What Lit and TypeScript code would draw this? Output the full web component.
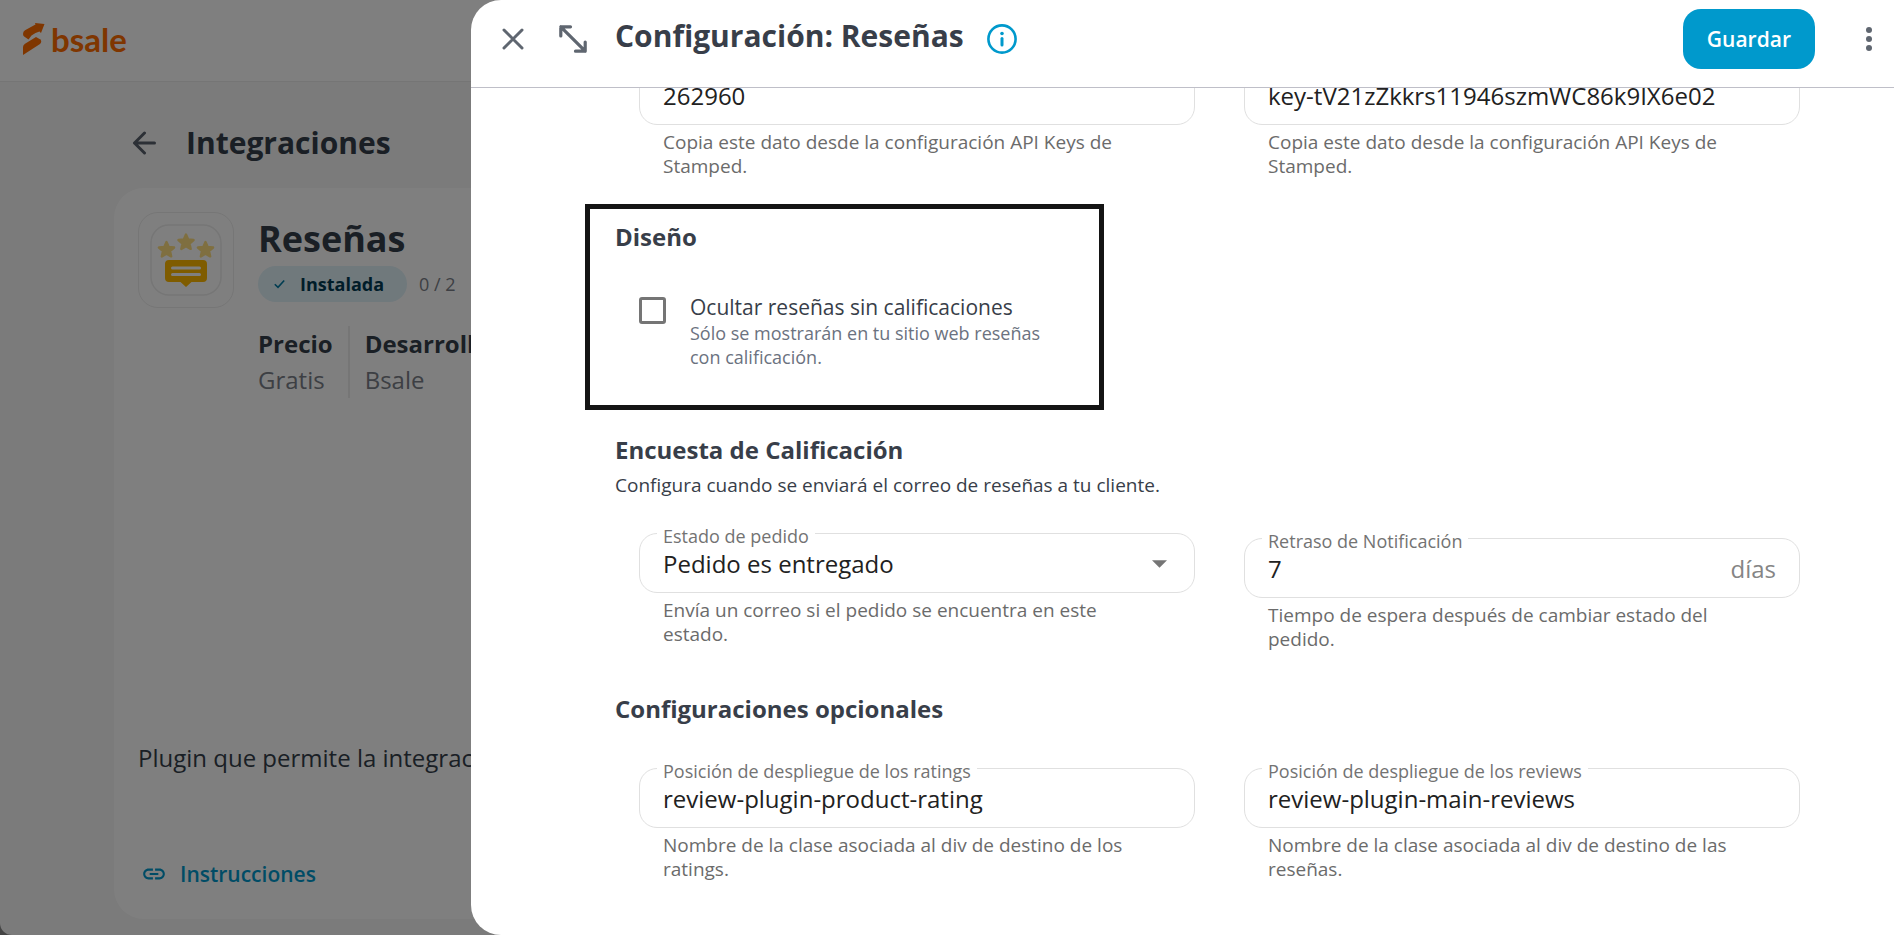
import { LitElement, html, css, nothing } from "lit";
import { customElement, property } from "lit/decorators.js";

@customElement("form-field")
class FormField extends LitElement {
  @property() label = "";
  @property() name = "";
  @property() value = "";
  @property() hint = "";
  @property() suffix = "";
  @property({ type: Array }) options: string[] = [];

  static styles = css`
    :host {
      display: block;
      min-width: 0;
    }
    .box {
      position: relative;
      display: flex;
      align-items: center;
      height: 60px;
      box-sizing: border-box;
      padding: 1px 23px 0;
      border: 1px solid #e0e0e0;
      border-radius: 18px;
      background: #fff;
    }
    .label {
      position: absolute;
      top: -8px;
      left: 17px;
      padding: 0 6px;
      background: #fff;
      color: #737373;
      font-size: 18px;
      line-height: 20px;
      white-space: nowrap;
    }
    .control {
      flex: 1;
      min-width: 0;
      height: 32px;
      margin: 0;
      padding: 0;
      border: 0;
      outline: 0;
      background: none;
      color: #212121;
      font: 400 24px/32px "Open Sans", sans-serif;
      appearance: none;
    }
    .suffix {
      color: #858585;
      font-size: 24px;
      line-height: 32px;
    }
    .caret {
      width: 15px;
      height: 8px;
      margin-right: 4px;
      fill: #757575;
      pointer-events: none;
    }
    .hint {
      margin: 5px 48px 0 24px;
      color: #6b6b6b;
      font-size: 19px;
      line-height: 24px;
    }
  `;

  render() {
    return html`
      <div class="box">
        ${this.label ? html`<label class="label" for="control">${this.label}</label>` : nothing}
        ${this.options.length
          ? html`<select class="control" id="control" aria-describedby="hint">
                ${this.options.map((o) => html`<option>${o}</option>`)}
              </select>
              <svg class="caret" viewBox="0 0 14 7" aria-hidden="true"><path d="M0 0h14l-7 7z" /></svg>`
          : html`<input
              class="control"
              id="control"
              aria-label=${this.label || this.name}
              aria-describedby="hint"
              .value=${this.value}
            />`}
        ${this.suffix ? html`<span class="suffix">${this.suffix}</span>` : nothing}
      </div>
      <p class="hint" id="hint">${this.hint}</p>
    `;
  }
}

@customElement("plugin-page")
class PluginPage extends LitElement {
  static styles = css`
    :host {
      display: flex;
      flex-direction: column;
      height: 100vh;
      overflow: hidden;
      border-bottom-left-radius: 12px;
      background: #f6f6f6;
      color: #353e4a;
    }
    .topbar {
      display: flex;
      align-items: center;
      gap: 6px;
      height: 82px;
      box-sizing: border-box;
      padding: 0 23px 4px;
      border-bottom: 1px solid #ebebeb;
      background: #fff;
      color: #ff6c00;
    }
    .mark {
      width: 22px;
      height: 32px;
      fill: currentColor;
    }
    .brand {
      font: 700 33px/40px Lato, sans-serif;
    }
    .heading {
      display: flex;
      align-items: center;
      gap: 30px;
      padding: 41px 132px 25px;
    }
    .back {
      display: flex;
      padding: 0;
      border: 0;
      background: none;
      color: #59616c;
    }
    .back svg {
      width: 24px;
      height: 24px;
    }
    .heading h1 {
      margin: 0;
      font-size: 30px;
      line-height: 40px;
    }
    .card {
      flex: 1;
      display: flex;
      flex-direction: column;
      align-items: flex-start;
      margin: 0 114px 16px;
      padding: 24px 24px 29px;
      border-radius: 30px;
      background: #fff;
    }
    .summary {
      display: flex;
      align-items: flex-start;
      gap: 24px;
    }
    .frame {
      flex: none;
      width: 96px;
      height: 96px;
      box-sizing: border-box;
      padding: 11px;
      border: 1px solid #ececec;
      border-radius: 20px;
    }
    .frame svg {
      display: block;
      width: 72px;
      height: 72px;
    }
    .name {
      margin: 3px 0;
      font-size: 36px;
      line-height: 48px;
    }
    .status {
      display: flex;
      align-items: center;
      gap: 12px;
      font-size: 18px;
      line-height: 36px;
      color: #7a7f88;
    }
    .chip {
      display: flex;
      align-items: center;
      gap: 15px;
      padding: 0 23px 0 16px;
      border-radius: 18px;
      background: #e0f2f9;
      color: #003a52;
      font-weight: 700;
    }
    .chip svg {
      width: 11px;
      height: 10px;
      color: #007aa3;
    }
    .facts {
      display: flex;
      margin: 24px 0 0;
      font-size: 24px;
      line-height: 36px;
    }
    .facts div + div {
      margin-left: 15px;
      padding-left: 15px;
      border-left: 2px solid #ececec;
    }
    .facts dt {
      font-weight: 700;
    }
    .facts dd {
      margin: 0;
      color: #7a7f88;
    }
    .about {
      margin: auto 0 82px;
      font-size: 24px;
      line-height: 36px;
    }
    .guide {
      display: flex;
      align-items: center;
      gap: 13px;
      padding-left: 3px;
      color: #0099cc;
      font-size: 21px;
      font-weight: 600;
      line-height: 32px;
      text-decoration: none;
    }
    .guide svg {
      width: 26px;
      height: 26px;
      fill: currentColor;
    }
  `;

  render() {
    return html`
      <header class="topbar">
        <svg class="mark" viewBox="0 0 22 32" aria-hidden="true">
          <path d="M0 11Q0 8.500 2 7.300L12.500 1.600 12 0 21.500 1 18 10 16.500 8.400Q12.500 9.500 8.500 12.500L5.500 16.500 1.500 13.800Q0 13 0 11Z" />
          <path d="M0 32V24Q0 22 2 20.700L13 14 17 16.300Q19.500 18.500 17 21Z" />
        </svg>
        <span class="brand">bsale</span>
      </header>
      <div class="heading">
        <button class="back" aria-label="Volver">
          <svg viewBox="0 0 24 24" fill="none" stroke="currentColor" stroke-width="3" stroke-linecap="round" stroke-linejoin="round">
            <path d="M22.500 12H2.500M12.500 2L2.500 12l10 10" />
          </svg>
        </button>
        <h1>Integraciones</h1>
      </div>
      <section class="card">
        <div class="summary">
          <div class="frame">
            <svg viewBox="0 0 72 72" aria-hidden="true">
              <rect x="1" y="1" width="70" height="70" rx="18" fill="#fff" stroke="#ececec" stroke-width="1.500" />
              <g fill="#ffdf80" stroke="#ffdf80" stroke-width="2.400" stroke-linejoin="round">
                <path d="M36 10.500l2.200 5 5.400.500-4.100 3.600 1.200 5.300-4.700-2.800-4.700 2.800 1.200-5.300-4.100-3.600 5.400-.500z" />
                <path d="M16.500 18l2.200 5 5.400.500-4.100 3.600 1.200 5.300-4.700-2.800-4.700 2.800 1.200-5.300-4.100-3.600 5.400-.500z" />
                <path d="M55.500 18l2.200 5 5.400.500-4.100 3.600 1.200 5.300-4.700-2.800-4.700 2.800 1.200-5.300-4.100-3.600 5.400-.500z" />
              </g>
              <path d="M19 36h34q4 0 4 4v14q0 4-4 4H41.500L36 63l-5.500-5H19q-4 0-4-4V40q0-4 4-4z" fill="#ffb800" />
              <path d="M22.500 44h27M22.500 50.500h27" stroke="#fff" stroke-width="3" stroke-linecap="round" />
            </svg>
          </div>
          <div>
            <h2 class="name">Reseñas</h2>
            <div class="status">
              <span class="chip">
                <svg viewBox="0 0 11 10" fill="none" stroke="currentColor" stroke-width="1.600"><path d="M.8 5.200l3.200 3.200L10.200 1.500" /></svg>
                Instalada
              </span>
              <span>0 / 2</span>
            </div>
            <dl class="facts">
              <div><dt>Precio</dt><dd>Gratis</dd></div>
              <div><dt>Desarrollador</dt><dd>Bsale</dd></div>
            </dl>
          </div>
        </div>
        <p class="about">Plugin que permite la integración</p>
        <a class="guide" href="#instrucciones">
          <svg viewBox="0 0 24 24" aria-hidden="true">
            <path d="M3.900 12c0-1.710 1.390-3.100 3.100-3.100h4V7H7c-2.760 0-5 2.240-5 5s2.240 5 5 5h4v-1.900H7c-1.710 0-3.100-1.390-3.100-3.100zM8 13h8v-2H8v2zm9-6h-4v1.900h4c1.710 0 3.100 1.390 3.100 3.100s-1.390 3.100-3.100 3.100h-4V17h4c2.760 0 5-2.240 5-5s-2.240-5-5-5z" />
          </svg>
          Instrucciones
        </a>
      </section>
    `;
  }
}

@customElement("settings-drawer")
class SettingsDrawer extends LitElement {
  static styles = css`
    :host {
      display: flex;
      flex-direction: column;
      overflow: hidden;
      border-radius: 30px 0 0 30px;
      background: #fff;
      color: #383e49;
    }
    .bar {
      display: flex;
      align-items: center;
      padding: 9px 10px 18px 27px;
      border-bottom: 1px solid #bfbfc8;
    }
    .icon {
      display: flex;
      padding: 0;
      border: 0;
      background: none;
      color: #5f6670;
    }
    .icon svg {
      width: 30px;
      height: 30px;
    }
    .expand {
      margin: 0 27px 0 30px;
    }
    .bar h1 {
      margin: 0 23px 0 0;
      padding-bottom: 6px;
      font-size: 30px;
      line-height: 40px;
    }
    .bar .info {
      color: #0099cc;
    }
    .save {
      height: 60px;
      margin: 0 39px 0 auto;
      padding: 0 24px;
      border: 0;
      border-radius: 18px;
      background: #0099cc;
      color: #fff;
      font: 600 21px/28px "Open Sans", sans-serif;
    }
    .body {
      flex: 1;
      min-height: 0;
      overflow: hidden;
      padding: 0 94px 0 144px;
    }
    .row {
      display: grid;
      grid-template-columns: 1fr 1fr;
      column-gap: 49px;
      padding-left: 24px;
    }
    .scrolled {
      margin-top: -23px;
    }
    .stepped {
      margin-top: 5px;
    }
    h2 {
      margin: 0;
      font-size: 24px;
      line-height: 32px;
    }
    .highlight {
      width: 519px;
      box-sizing: border-box;
      margin: 26px 0 24px -30px;
      padding: 12px 25px 36px;
      border: 5px solid #141414;
    }
    .check {
      display: grid;
      grid-template-columns: 27px 1fr;
      column-gap: 24px;
      margin: 40px 0 0 24px;
    }
    .check input {
      grid-row: span 2;
      width: 27px;
      height: 27px;
      box-sizing: border-box;
      margin: 4px 0 0;
      border: 3px solid #757575;
      border-radius: 3px;
      appearance: none;
    }
    .check label {
      font-size: 21px;
      line-height: 28px;
    }
    .check p {
      margin: 0;
      color: #6b7280;
      font-size: 18px;
      line-height: 24px;
    }
    .lead {
      margin: 7px 0 36px;
      font-size: 19px;
      line-height: 24px;
    }
    .optional {
      margin: 42px 0 43px;
    }
  `;

  render() {
    return html`
      <header class="bar">
        <button class="icon" aria-label="Cerrar">
          <svg viewBox="0 0 30 30" fill="none" stroke="currentColor" stroke-width="3" stroke-linecap="round"><path d="M6 6l18 18M24 6L6 24" /></svg>
        </button>
        <button class="icon expand" aria-label="Expandir">
          <svg viewBox="0 0 30 30" fill="none" stroke="currentColor" stroke-width="3.200" stroke-linecap="round" stroke-linejoin="round">
            <path d="M2.800 12V2.800H12.500M2.800 2.800l24.400 24.400M17.500 27.200h9.700V18" />
          </svg>
        </button>
        <h1>Configuración: Reseñas</h1>
        <button class="icon info" aria-label="Información">
          <svg viewBox="0 0 30 30" fill="none" stroke="currentColor" stroke-linecap="round">
            <circle cx="15" cy="15" r="13.600" stroke-width="2.600" />
            <path d="M15 14.500v6.500" stroke-width="3" />
            <path d="M15 9.500v.010" stroke-width="3.600" />
          </svg>
        </button>
        <button class="save">Guardar</button>
        <button class="icon" aria-label="Más opciones">
          <svg viewBox="0 0 30 30" fill="currentColor"><circle cx="15" cy="6" r="3" /><circle cx="15" cy="15" r="3" /><circle cx="15" cy="24" r="3" /></svg>
        </button>
      </header>
      <div class="body">
        <div class="row scrolled">
          <form-field name="Store Hash" value="262960" hint="Copia este dato desde la configuración API Keys de Stamped."></form-field>
          <form-field name="API Key" value="key-tV21zZkkrs11946szmWC86k9IX6e02" hint="Copia este dato desde la configuración API Keys de Stamped."></form-field>
        </div>
        <section class="highlight">
          <h2>Diseño</h2>
          <div class="check">
            <input type="checkbox" id="hide" aria-describedby="hide-hint" />
            <label for="hide">Ocultar reseñas sin calificaciones</label>
            <p id="hide-hint">Sólo se mostrarán en tu sitio web reseñas con calificación.</p>
          </div>
        </section>
        <h2>Encuesta de Calificación</h2>
        <p class="lead">Configura cuando se enviará el correo de reseñas a tu cliente.</p>
        <div class="row">
          <form-field
            label="Estado de pedido"
            .options=${["Pedido es entregado"]}
            hint="Envía un correo si el pedido se encuentra en este estado."
          ></form-field>
          <form-field
            class="stepped"
            label="Retraso de Notificación"
            value="7"
            suffix="días"
            hint="Tiempo de espera después de cambiar estado del pedido."
          ></form-field>
        </div>
        <h2 class="optional">Configuraciones opcionales</h2>
        <div class="row">
          <form-field
            label="Posición de despliegue de los ratings"
            value="review-plugin-product-rating"
            hint="Nombre de la clase asociada al div de destino de los ratings."
          ></form-field>
          <form-field
            label="Posición de despliegue de los reviews"
            value="review-plugin-main-reviews"
            hint="Nombre de la clase asociada al div de destino de las reseñas."
          ></form-field>
        </div>
      </div>
    `;
  }
}

@customElement("app-root")
class AppRoot extends LitElement {
  static styles = css`
    :host {
      display: block;
      position: relative;
      min-height: 100vh;
      overflow: hidden;
      background: #888;
      font-family: "Open Sans", sans-serif;
    }
    .backdrop {
      position: absolute;
      inset: 0;
      background: rgba(0, 0, 0, 0.5);
    }
    .drawer {
      position: absolute;
      inset: 0 0 0 471px;
    }
  `;

  render() {
    return html`
      <plugin-page></plugin-page>
      <div class="backdrop"></div>
      <settings-drawer class="drawer"></settings-drawer>
    `;
  }
}
